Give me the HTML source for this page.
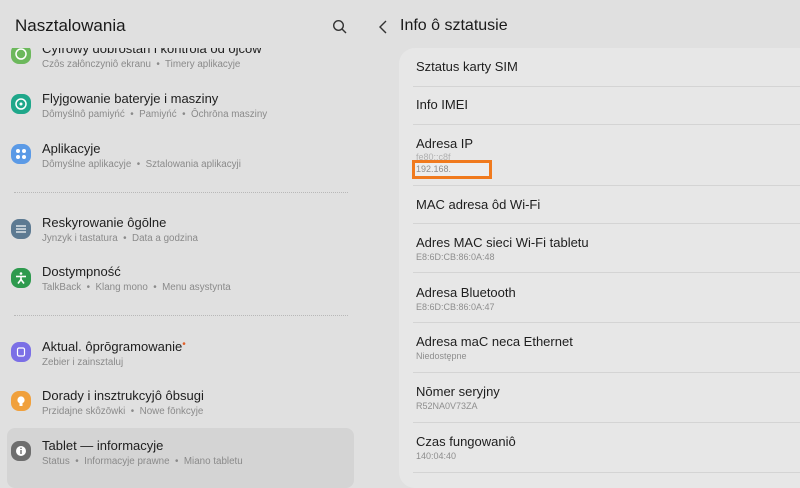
<!DOCTYPE html>
<html><head><meta charset="utf-8"><style>
*{margin:0;padding:0;box-sizing:border-box}
body{width:800px;height:477px;overflow:hidden;background:#e0e0e0;font-family:"Liberation Sans",sans-serif;position:relative}
.a{position:absolute;white-space:nowrap}
.t{font-size:13px;color:#1e1e1e}
.s{font-size:9.8px;color:#8a8a8a}
.ic{position:absolute;left:11px;width:20px;height:20px;border-radius:8px}
.ic svg{position:absolute;left:0;top:0}
.dot{position:absolute;left:14px;width:334px;border-top:1px dotted #b8b8b8}
.card{position:absolute;left:399px;top:48px;width:420px;height:440px;background:#e7e7e7;border-radius:16px}
.sep{position:absolute;left:413px;width:387px;border-top:1px solid #d4d4d4}
.rt{font-size:13px;color:#1e1e1e;left:416px}
.rs{font-size:9px;color:#8e8e8e;left:416px}
</style></head><body>
<div class="a" style="left:15px;top:16px;font-size:17px;color:#1a1a1a">Nasztalowania</div>
<svg class="a" style="left:332px;top:19px" width="16" height="16" viewBox="0 0 16 16"><circle cx="6.5" cy="6.5" r="4.8" fill="none" stroke="#333" stroke-width="1.4"/><line x1="10" y1="10" x2="14" y2="14" stroke="#333" stroke-width="1.4"/></svg>

<div class="ic" style="top:44px;background:#6cb85c"><svg width="20" height="20"><circle cx="10" cy="10" r="5" fill="none" stroke="#fff" stroke-width="1.5"/></svg></div>
<div class="a t" style="left:42px;top:41px">Cyfrowy dobrostan i kontrola od ojców</div>
<div class="a s" style="left:42px;top:59px">Czôs załônczyniô ekranu &nbsp;•&nbsp; Timery aplikacyje</div>
<div style="position:absolute;left:0;top:38px;width:360px;height:10px;background:#e0e0e0"></div>

<div class="ic" style="top:94px;background:#1fa78a"><svg width="20" height="20"><circle cx="10" cy="10" r="5" fill="none" stroke="#fff" stroke-width="1.5"/><circle cx="10" cy="10" r="1.5" fill="#fff"/></svg></div>
<div class="a t" style="left:42px;top:91px">Flyjgowanie bateryje i masziny</div>
<div class="a s" style="left:42px;top:109px">Dômyślnô pamiyńć &nbsp;•&nbsp; Pamiyńć &nbsp;•&nbsp; Ôchrōna masziny</div>

<div class="ic" style="top:144px;background:#5b9ae6"><svg width="20" height="20" fill="#fff"><circle cx="7" cy="7" r="2"/><circle cx="13" cy="7" r="2"/><circle cx="7" cy="13" r="2"/><circle cx="13" cy="13" r="2"/></svg></div>
<div class="a t" style="left:42px;top:141px">Aplikacyje</div>
<div class="a s" style="left:42px;top:159px">Dômyślne aplikacyje &nbsp;•&nbsp; Sztalowania aplikacyji</div>

<div class="dot" style="top:192px"></div>

<div class="ic" style="top:219px;background:#5d7a92"><svg width="20" height="20" stroke="#fff" stroke-width="1.2"><line x1="5" y1="7" x2="15" y2="7"/><line x1="5" y1="10" x2="15" y2="10"/><line x1="5" y1="13" x2="15" y2="13"/></svg></div>
<div class="a t" style="left:42px;top:215px">Reskyrowanie ôgōlne</div>
<div class="a s" style="left:42px;top:233px">Jynzyk i tastatura &nbsp;•&nbsp; Data a godzina</div>

<div class="ic" style="top:268px;background:#2e9a4e"><svg width="20" height="20" stroke="#fff" stroke-width="1.6" fill="none"><circle cx="10" cy="5.5" r="1.3" fill="#fff" stroke="none"/><line x1="5" y1="8.5" x2="15" y2="8.5"/><line x1="10" y1="8.5" x2="10" y2="11.5"/><polyline points="7,15.5 10,11.5 13,15.5"/></svg></div>
<div class="a t" style="left:42px;top:264px">Dostympność</div>
<div class="a s" style="left:42px;top:282px">TalkBack &nbsp;•&nbsp; Klang mono &nbsp;•&nbsp; Menu asystynta</div>

<div class="dot" style="top:315px"></div>

<div class="ic" style="top:342px;background:#7b6fe6"><svg width="20" height="20"><rect x="6.5" y="6" width="7" height="8" rx="1.5" fill="none" stroke="#fff" stroke-width="1.2"/></svg></div>
<div class="a t" style="left:42px;top:339px">Aktual. ôprōgramowanie<span style="color:#e0602a;font-size:10px;vertical-align:top">•</span></div>
<div class="a s" style="left:42px;top:357px">Zebier i zainsztaluj</div>

<div class="ic" style="top:391px;background:#f0a03c"><svg width="20" height="20" fill="#fff"><circle cx="10" cy="9" r="3.6"/><rect x="8.5" y="12" width="3" height="3"/></svg></div>
<div class="a t" style="left:42px;top:388px">Dorady i insztrukcyjô ôbsugi</div>
<div class="a s" style="left:42px;top:406px">Przidajne skôzōwki &nbsp;•&nbsp; Nowe fōnkcyje</div>

<div style="position:absolute;left:7px;top:428px;width:347px;height:60px;background:#d4d4d4;border-radius:8px"></div>
<div class="ic" style="top:441px;background:#6e6e6e"><svg width="20" height="20"><circle cx="10" cy="10" r="5" fill="#fff"/><rect x="9.3" y="9" width="1.4" height="4" fill="#6e6e6e"/><circle cx="10" cy="7.3" r="0.8" fill="#6e6e6e"/></svg></div>
<div class="a t" style="left:42px;top:438px">Tablet — informacyje</div>
<div class="a s" style="left:42px;top:456px">Status &nbsp;•&nbsp; Informacyje prawne &nbsp;•&nbsp; Miano tabletu</div>

<svg class="a" style="left:378px;top:19px" width="10" height="16" viewBox="0 0 10 16"><polyline points="8,2 2,8 8,14" fill="none" stroke="#333" stroke-width="1.4"/></svg>
<div class="a" style="left:400px;top:17px;font-size:16px;color:#1a1a1a">Info ô sztatusie</div>

<div class="card"></div>
<div class="a rt" style="top:59px">Sztatus karty SIM</div>
<div class="sep" style="top:86px"></div>
<div class="a rt" style="top:97px">Info IMEI</div>
<div class="sep" style="top:124px"></div>
<div class="a rt" style="top:136px">Adresa IP</div>
<div class="a rs" style="top:152px;color:#b0b0b0">fe80::c8f</div>
<div style="position:absolute;left:412px;top:160px;width:80px;height:19px;border:3px solid #f07a1e;background:#ededed"></div>
<div class="a rs" style="top:164px">192.168.</div>
<div class="sep" style="top:185px"></div>
<div class="a rt" style="top:197px">MAC adresa ôd Wi-Fi</div>
<div class="sep" style="top:223px"></div>
<div class="a rt" style="top:235px">Adres MAC sieci Wi-Fi tabletu</div>
<div class="a rs" style="top:252px">E8:6D:CB:86:0A:48</div>
<div class="sep" style="top:272px"></div>
<div class="a rt" style="top:285px">Adresa Bluetooth</div>
<div class="a rs" style="top:302px">E8:6D:CB:86:0A:47</div>
<div class="sep" style="top:322px"></div>
<div class="a rt" style="top:334px">Adresa maC neca Ethernet</div>
<div class="a rs" style="top:351px">Niedostępne</div>
<div class="sep" style="top:372px"></div>
<div class="a rt" style="top:384px">Nōmer seryjny</div>
<div class="a rs" style="top:401px">R52NA0V73ZA</div>
<div class="sep" style="top:422px"></div>
<div class="a rt" style="top:434px">Czas fungowaniô</div>
<div class="a rs" style="top:451px">140:04:40</div>
<div class="sep" style="top:472px"></div>
</body></html>
